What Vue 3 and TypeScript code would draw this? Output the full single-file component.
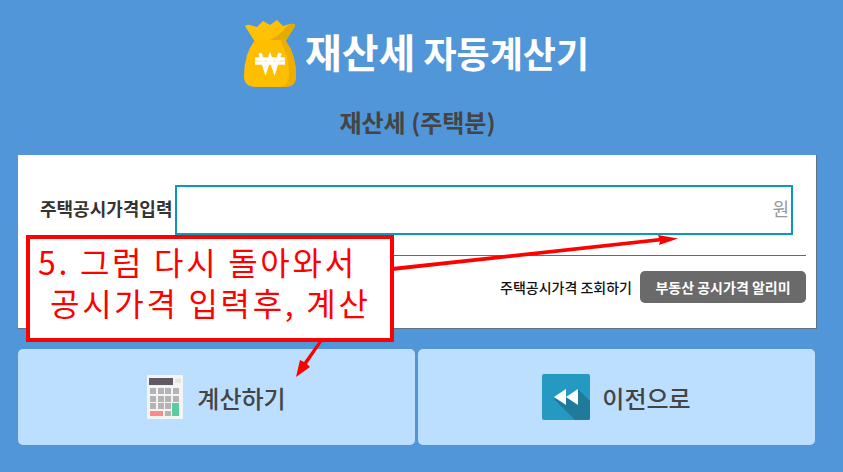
<script setup lang="ts">
const title = '재산세'
const titleRest = '자동계산기'
</script>

<template>
  <div class="page">
    <header class="head">
      <svg class="bag" width="52" height="68" viewBox="0 0 52 68">
        <path d="M1 6 Q3 4 6 5 L13 7 L19 1 L26 5 L33 0 L39 6 L46 4 Q51 3 51 6 L41 22 L11 22 Z" fill="#ffc107"/>
        <path d="M51 6 L41 22 L20 22 Q34 18 42 7 L46 4 Q51 3 51 6 Z" fill="#e5ac00"/>
        <path d="M11 20 H41 Q52 34 52 56 Q52 67 40 67 H12 Q0 67 0 56 Q0 34 11 20 Z" fill="#ffbe00"/>
        <path d="M41 20 Q52 34 52 56 Q52 67 40 67 H34 Q45 67 45 54 Q45 36 36 20 Z" fill="#eeae00"/>
        <path d="M16 33 L21.5 50 L26 37 L30.5 50 L36 33 M11 39 H41 M11 43 H41" fill="none" stroke="#fff" stroke-width="3.6"/>
      </svg>
      <h1 class="title"><span class="big">{{ title }}</span> {{ titleRest }}</h1>
    </header>
    <h2 class="sub">재산세 (주택분)</h2>

    <section class="card">
      <div class="row">
        <label class="label">주택공시가격입력</label>
        <div class="input"><span class="won">원</span></div>
      </div>
      <hr class="rule" />
      <div class="links">
        <span class="link">주택공시가격 조회하기</span>
        <span class="pill">부동산 공시가격 알리미</span>
      </div>
    </section>

    <div class="actions">
      <div class="action">
        <svg width="36" height="44" viewBox="0 0 36 44">
          <rect width="36" height="44" rx="1" fill="#f4f4f2"/>
          <rect x="2" y="3" width="24" height="7" fill="#5f5a66"/>
          <rect x="28" y="4" width="6" height="4" fill="#e4e4e4"/>
          <g fill="#b4b4b6">
            <rect x="3" y="13" width="6" height="6"/><rect x="11" y="13" width="6" height="6"/><rect x="18" y="13" width="6" height="6"/><rect x="26" y="13" width="6" height="6"/>
            <rect x="3" y="21" width="6" height="6"/><rect x="11" y="21" width="6" height="6"/><rect x="18" y="21" width="6" height="6"/><rect x="26" y="21" width="6" height="6"/>
            <rect x="3" y="28" width="6" height="6"/><rect x="11" y="28" width="6" height="6"/><rect x="18" y="28" width="6" height="6"/>
            <rect x="18" y="36" width="6" height="5"/>
          </g>
          <rect x="25" y="28" width="7" height="13" fill="#5ccba0"/>
          <rect x="3" y="36" width="13" height="5" fill="#fb8a8a"/>
        </svg>
        <span>계산하기</span>
      </div>
      <div class="action back">
        <svg width="48" height="46" viewBox="0 0 48 46">
          <rect width="48" height="46" rx="2" fill="#2499c1"/>
          <path d="M12 25 L33 46 H46 Q48 46 48 44 V27 L36 15 L33 21 Z" fill="#1f7a9b"/>
          <path d="M12 23 L24 15 V31 Z M24 23 L36 15 V31 Z" fill="#fff"/>
        </svg>
        <span>이전으로</span>
      </div>
    </div>

    <div class="note">
      <div>5. 그럼 다시 돌아와서</div>
      <div class="second">공시가격 입력후, 계산</div>
    </div>
    <svg class="arrows" width="843" height="472" viewBox="0 0 843 472">
      <path d="M392 271 L660 241.5 L659 245 L678 238.5 L658 235 L659 238 L392 267 Z" fill="#f00"/>
      <path d="M319 341 L304 362 L300 360 L296 377 L310 367 L307 364 L322 342 Z" fill="#f00"/>
    </svg>
  </div>
</template>

<style scoped>
.page {
  position: relative;
  width: 843px;
  height: 472px;
  overflow: hidden;
  background: #5196d8;
  font-family: "Noto Sans CJK KR", "Noto Sans", sans-serif;
  box-sizing: border-box;
  padding: 0 26px 0 18px;
}
.head {
  height: 95px;
  padding-top: 20px;
  box-sizing: border-box;
  display: flex;
  justify-content: center;
  gap: 9px;
  padding-right: 2px;
}
.bag { flex: none; }
.title {
  margin: 0;
  color: #fff;
  font-size: 36px;
  font-weight: 700;
  line-height: 62px;
  white-space: nowrap;
}
.big { font-size: 40px; }
.sub {
  margin: 0;
  height: 60px;
  line-height: 54px;
  text-align: center;
  color: #444;
  font-size: 24px;
  font-weight: 700;
}
.card {
  background: #fff;
  height: 174px;
  box-sizing: border-box;
  padding: 30px 10px 0 22px;
  border-right: 1px solid #5d7287;
  border-bottom: 1px solid #5d7287;
}
.row { display: flex; align-items: center; }
.label {
  width: 135px;
  flex: none;
  color: #333;
  font-size: 18px;
  font-weight: 700;
  line-height: 26px;
  padding-bottom: 5px;
  white-space: nowrap;
}
.input {
  flex: 1;
  height: 50px;
  margin-right: 13px;
  box-sizing: border-box;
  border: 2px solid #0b98bd;
  display: flex;
  align-items: center;
  justify-content: flex-end;
  padding: 0 2px 4px 0;
}
.won { color: #999; font-size: 18px; }
.rule {
  margin: 20px 0 0;
  border: 0;
  border-top: 1px solid #5d6b7a;
}
.links {
  display: flex;
  justify-content: flex-end;
  align-items: center;
  gap: 8px;
  margin-top: 15px;
}
.link { color: #111; font-size: 14px; font-weight: 500; }
.pill {
  width: 166px;
  height: 32px;
  border-radius: 5px;
  background: #6a6a6a;
  color: #fff;
  font-size: 14px;
  font-weight: 700;
  display: flex;
  align-items: center;
  justify-content: center;
}
.actions {
  display: grid;
  grid-template-columns: 397px 397px;
  gap: 3px;
  margin-top: 20px;
}
.action {
  height: 96px;
  border-radius: 5px;
  background: #bddfff;
  color: #444;
  font-size: 24px;
  font-weight: 500;
  display: flex;
  align-items: center;
  justify-content: center;
  gap: 14px;
}
.back { gap: 12px; }
.note {
  position: absolute;
  left: 26px;
  top: 235px;
  width: 368px;
  height: 107px;
  box-sizing: border-box;
  border: 4px solid #f00;
  background: #fff;
  color: #f00;
  font-size: 32px;
  font-weight: 400;
  line-height: 41px;
  letter-spacing: 2.7px;
  padding: 2px 0 0 8px;
  white-space: nowrap;
}
.second { padding-left: 12px; }
.arrows {
  position: absolute;
  left: 0;
  top: 0;
  pointer-events: none;
}
</style>
